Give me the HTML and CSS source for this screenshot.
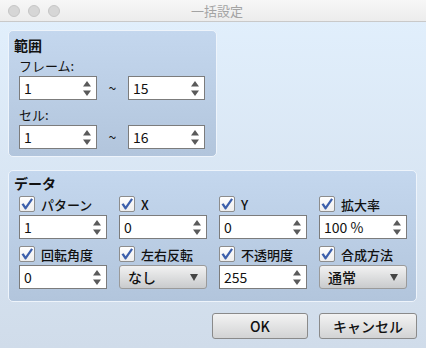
FILE: index.html
```html
<!DOCTYPE html>
<html>
<head>
	<meta charset="UTF-8">
	<title>一括設定</title>
	<link rel="stylesheet" href="styles.css">
</head>
<body>

	<div class="titlebar">
		<div class="lights">
			<span class="light"></span>
			<span class="light"></span>
			<span class="light"></span>
		</div>
		<div class="title">一括設定</div>
	</div>

	<div class="content">

		<!-- 範囲 -->
		<div class="group range">
			<div class="group-title">範囲</div>

			<div class="label">フレーム:</div>
			<div class="range-row">
				<div class="spin w78"><span class="val">1</span><svg class="arrows" width="8" height="15" viewBox="0 0 8 15"><path d="M4 0L8 5.5H0Z M0 9.5H8L4 15Z"/></svg></div>
				<span class="tilde">~</span>
				<div class="spin w77"><span class="val">15</span><svg class="arrows" width="8" height="15" viewBox="0 0 8 15"><path d="M4 0L8 5.5H0Z M0 9.5H8L4 15Z"/></svg></div>
			</div>

			<div class="label second">セル:</div>
			<div class="range-row">
				<div class="spin w78"><span class="val">1</span><svg class="arrows" width="8" height="15" viewBox="0 0 8 15"><path d="M4 0L8 5.5H0Z M0 9.5H8L4 15Z"/></svg></div>
				<span class="tilde">~</span>
				<div class="spin w77"><span class="val">16</span><svg class="arrows" width="8" height="15" viewBox="0 0 8 15"><path d="M4 0L8 5.5H0Z M0 9.5H8L4 15Z"/></svg></div>
			</div>
		</div>

		<!-- データ -->
		<div class="group data">
			<div class="group-title">データ</div>

			<div class="fields">

				<div class="field">
					<div class="check"><span class="box"><svg width="14" height="14" viewBox="0 0 14 14"><path d="M1.5 7.2L3.6 6.2L5.6 9.2L11.2 1.2L13 2.6L6 12.6H5Z"/></svg></span>パターン</div>
					<div class="spin"><span class="val">1</span><svg class="arrows" width="8" height="15" viewBox="0 0 8 15"><path d="M4 0L8 5.5H0Z M0 9.5H8L4 15Z"/></svg></div>
				</div>

				<div class="field">
					<div class="check"><span class="box"><svg width="14" height="14" viewBox="0 0 14 14"><path d="M1.5 7.2L3.6 6.2L5.6 9.2L11.2 1.2L13 2.6L6 12.6H5Z"/></svg></span>X</div>
					<div class="spin"><span class="val">0</span><svg class="arrows" width="8" height="15" viewBox="0 0 8 15"><path d="M4 0L8 5.5H0Z M0 9.5H8L4 15Z"/></svg></div>
				</div>

				<div class="field">
					<div class="check"><span class="box"><svg width="14" height="14" viewBox="0 0 14 14"><path d="M1.5 7.2L3.6 6.2L5.6 9.2L11.2 1.2L13 2.6L6 12.6H5Z"/></svg></span>Y</div>
					<div class="spin"><span class="val">0</span><svg class="arrows" width="8" height="15" viewBox="0 0 8 15"><path d="M4 0L8 5.5H0Z M0 9.5H8L4 15Z"/></svg></div>
				</div>

				<div class="field">
					<div class="check"><span class="box"><svg width="14" height="14" viewBox="0 0 14 14"><path d="M1.5 7.2L3.6 6.2L5.6 9.2L11.2 1.2L13 2.6L6 12.6H5Z"/></svg></span>拡大率</div>
					<div class="spin"><span class="val">100 %</span><svg class="arrows" width="8" height="15" viewBox="0 0 8 15"><path d="M4 0L8 5.5H0Z M0 9.5H8L4 15Z"/></svg></div>
				</div>

				<div class="field">
					<div class="check"><span class="box"><svg width="14" height="14" viewBox="0 0 14 14"><path d="M1.5 7.2L3.6 6.2L5.6 9.2L11.2 1.2L13 2.6L6 12.6H5Z"/></svg></span>回転角度</div>
					<div class="spin"><span class="val">0</span><svg class="arrows" width="8" height="15" viewBox="0 0 8 15"><path d="M4 0L8 5.5H0Z M0 9.5H8L4 15Z"/></svg></div>
				</div>

				<div class="field">
					<div class="check"><span class="box"><svg width="14" height="14" viewBox="0 0 14 14"><path d="M1.5 7.2L3.6 6.2L5.6 9.2L11.2 1.2L13 2.6L6 12.6H5Z"/></svg></span>左右反転</div>
					<div class="select"><span class="val">なし</span><svg class="drop" width="8" height="7" viewBox="0 0 8 7"><path d="M0 0H8L4 7Z"/></svg></div>
				</div>

				<div class="field">
					<div class="check"><span class="box"><svg width="14" height="14" viewBox="0 0 14 14"><path d="M1.5 7.2L3.6 6.2L5.6 9.2L11.2 1.2L13 2.6L6 12.6H5Z"/></svg></span>不透明度</div>
					<div class="spin"><span class="val">255</span><svg class="arrows" width="8" height="15" viewBox="0 0 8 15"><path d="M4 0L8 5.5H0Z M0 9.5H8L4 15Z"/></svg></div>
				</div>

				<div class="field">
					<div class="check"><span class="box"><svg width="14" height="14" viewBox="0 0 14 14"><path d="M1.5 7.2L3.6 6.2L5.6 9.2L11.2 1.2L13 2.6L6 12.6H5Z"/></svg></span>合成方法</div>
					<div class="select"><span class="val">通常</span><svg class="drop" width="8" height="7" viewBox="0 0 8 7"><path d="M0 0H8L4 7Z"/></svg></div>
				</div>

			</div>
		</div>

		<div class="buttons">
			<button type="button" class="btn ok">OK</button>
			<button type="button" class="btn cancel">キャンセル</button>
		</div>

	</div>

</body>
</html>
```

FILE: styles.css
```css
* { box-sizing: border-box; }

body {
	margin: 0;
	height: 348px;
	font-family: "Noto Sans CJK JP", "Noto Sans", sans-serif;
	font-size: 13px;
	color: #111;
	background: linear-gradient(#e2f0fd, #d0dcea);
	overflow: hidden;
}

/* タイトルバー */
.titlebar {
	height: 22px;
	display: flex;
	align-items: center;
	background: linear-gradient(#f7f7f7, #ececec);
	border-bottom: 1px solid #c9c9c9;
}

.lights {
	display: flex;
	gap: 8px;
	padding-left: 8px;
	width: 0;
}

.light {
	flex: none;
	width: 12px;
	height: 12px;
	border-radius: 50%;
	background: #d6d6d6;
	border: 1px solid #c6c6c6;
}

.title {
	flex: 1;
	text-align: center;
	color: #a3a3a3;
	font-size: 13px;
	line-height: 21px;
}

.content {
	padding: 8px 9px 0 8px;
}

/* グループ */
.group {
	border: 1px solid #eef4fb;
	border-radius: 5px;
	background: linear-gradient(#c4d7ee, #b2c5dc);
}

.group-title {
	font-weight: bold;
	font-size: 14px;
	line-height: 20px;
	padding-left: 5px;
}

.range {
	width: 209px;
	height: 127px;
}

.range .group-title { margin-top: 4px; }

.label {
	padding-left: 10px;
	line-height: 18px;
	margin-top: 2px;
	margin-bottom: 1px;
}

.label.second { margin-top: 6px; }

.range-row {
	display: flex;
	align-items: center;
	padding-left: 10px;
}

.tilde {
	width: 31px;
	text-align: center;
	font-size: 14px;
}

.w78 { width: 78px; }
.w77 { width: 77px; }

/* スピンボックス */
.spin {
	height: 24px;
	display: flex;
	align-items: center;
	justify-content: space-between;
	background: #fff;
	border: 1px solid #7c7c7c;
	padding: 0 5px 0 4px;
}

.val {
	font-size: 14px;
	line-height: 22px;
}

.arrows { fill: #5a5a5a; }

.data {
	margin-top: 13px;
	height: 132px;
}

.data .group-title { margin-top: 2px; }

.fields {
	display: grid;
	grid-template-columns: repeat(4, 88px);
	column-gap: 12px;
	row-gap: 7px;
	padding-left: 10px;
	margin-top: 3px;
}

.field {
	display: flex;
	flex-direction: column;
	gap: 3px;
}

.check {
	display: flex;
	align-items: center;
	height: 16px;
	font-weight: 500;
	font-size: 13px;
}

.box {
	width: 16px;
	height: 16px;
	margin-right: 6px;
	border: 1px solid #8d8d8d;
	border-radius: 2px;
	background: linear-gradient(#ffffff, #eeeeee);
	display: flex;
	align-items: center;
	justify-content: center;
}

.box svg { fill: #3d60ac; }

/* ドロップダウン */
.select {
	height: 24px;
	display: flex;
	align-items: center;
	justify-content: space-between;
	padding: 0 8px 0 8px;
	border: 1px solid #9a9a9a;
	border-radius: 3px;
	background: linear-gradient(#f2f2f2, #c9cbcd);
}

.select .val { font-weight: 500; }

.drop { fill: #444; }

/* ボタン */
.buttons {
	display: flex;
	justify-content: flex-end;
	gap: 11px;
	margin-top: 11px;
}

.btn {
	height: 26px;
	border: 1px solid #8a8a8a;
	border-radius: 3px;
	background: linear-gradient(#f3f3f3, #d2d3d4);
	font-family: "Noto Sans CJK JP", "Noto Sans", sans-serif;
	font-size: 14px;
	font-weight: 500;
	color: #111;
	padding: 0;
}

.ok { width: 96px; }
.cancel { width: 98px; }
```
